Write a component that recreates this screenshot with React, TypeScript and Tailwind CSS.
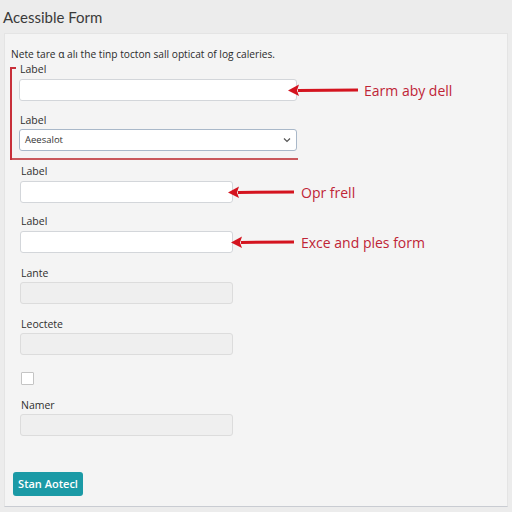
const font = { fontFamily: '"Open Sans", "Noto Sans", sans-serif' };

const Arrow = ({ width, className }: { width: number; className?: string }) => (
  <svg width={width} height="14" viewBox={`0 0 ${width} 14`} className={className}>
    <path d={`M${width} 7 L10 7.4`} stroke="#d4141f" strokeWidth="3" />
    <path d="M0 7.5 L11 1.5 L9 7.5 L11 13 Z" fill="#d4141f" />
  </svg>
);

const FieldLabel = ({ children }: { children: React.ReactNode }) => (
  <div className="h-[14px] mb-[2px] text-[10.5px] leading-[14px] font-medium text-[#2f2f2f] pl-[1px]">
    {children}
  </div>
);

const Note = ({ children }: { children: React.ReactNode }) => (
  <span className="text-[14px] leading-[18px] text-[#bf2436] whitespace-nowrap">{children}</span>
);

export default function App() {
  return (
    <div className="w-[512px] h-[512px] bg-[#ececec] flex flex-col overflow-hidden" style={font}>
      <h1
        className="h-[33px] pl-[3px] pt-[7px] text-[15px] leading-[20px] text-[#3a3a3a] font-normal"
        style={{ fontFamily: 'Lato, "Open Sans", sans-serif' }}
      >
        Acessible Form
      </h1>
      <div className="mx-[4px] h-[474px] bg-[#f4f4f4] border border-[#e4e4e4] border-b-[#c9ccd2] pl-[5px] pt-[13px]">
        <p className="pl-[1px] text-[10.2px] leading-[14px] text-[#2b2b2b]">
          Nete tare ɑ alı the tinp tocton sall opticat of log caleries.
        </p>

        <div className="relative w-[288px] border-b-[2px] border-[#c9585c] pl-[9px] pb-[7px] mt-[1px]">
          <div className="absolute left-0 top-[5px] bottom-[-2px] w-[1.5px] bg-[#c8303a]" />
          <div className="absolute left-0 top-[5px] w-[6px] h-[1.5px] bg-[#c8303a]" />
          <FieldLabel>Label</FieldLabel>
          <div className="flex items-center">
            <div className="w-[278px] h-[22px] shrink-0 bg-white border border-[#d3d6da] rounded-[3px]" />
            <Arrow width={70} className="ml-[-9px] shrink-0" />
            <span className="ml-[6px]"><Note>Earm aby dell</Note></span>
          </div>
          <div className="mt-[11px]">
            <FieldLabel>Label</FieldLabel>
            <div className="w-[278px] h-[22px] bg-white border border-[#a9b8c9] rounded-[3px] flex items-center justify-between px-[5px]">
              <span className="text-[9.5px] text-[#333]">Aeesalot</span>
              <svg width="8" height="6" viewBox="0 0 8 6">
                <path d="M1 1.5 L4 4.5 L7 1.5" stroke="#555" strokeWidth="1.2" fill="none" />
              </svg>
            </div>
          </div>
        </div>

        <div className="pl-[10px] mt-[4px] flex flex-col">
          <FieldLabel>Label</FieldLabel>
          <div className="flex items-center">
            <div className="w-[213px] h-[22px] shrink-0 bg-white border border-[#d3d6da] rounded-[3px]" />
            <Arrow width={66} className="ml-[-5px] shrink-0" />
            <span className="ml-[7px]"><Note>Opr frell</Note></span>
          </div>

          <div className="mt-[10px]">
            <FieldLabel>Label</FieldLabel>
            <div className="flex items-center">
              <div className="w-[213px] h-[22px] shrink-0 bg-white border border-[#d3d6da] rounded-[3px]" />
              <Arrow width={63} className="ml-[-2px] shrink-0" />
              <span className="ml-[7px]"><Note>Exce and ples form</Note></span>
            </div>
          </div>

          <div className="mt-[12px]">
            <FieldLabel>Lante</FieldLabel>
            <div className="w-[213px] h-[22px] bg-[#efefef] border border-[#dcdcdc] rounded-[3px]" />
          </div>

          <div className="mt-[13px]">
            <FieldLabel>Leoctete</FieldLabel>
            <div className="w-[213px] h-[22px] bg-[#efefef] border border-[#dcdcdc] rounded-[3px]" />
          </div>

          <div className="mt-[17px] ml-[1px] w-[13px] h-[13px] bg-white border border-[#c4c4c4] rounded-[1px]" />

          <div className="mt-[13px]">
            <FieldLabel>Namer</FieldLabel>
            <div className="w-[213px] h-[22px] bg-[#efefef] border border-[#dcdcdc] rounded-[3px]" />
          </div>
        </div>

        <button className="ml-[3px] mt-[36px] w-[70px] h-[24px] bg-[#1b9aa6] rounded-[3px] text-white text-[11px] font-semibold">
          Stan Aotecl
        </button>
      </div>
    </div>
  );
}
